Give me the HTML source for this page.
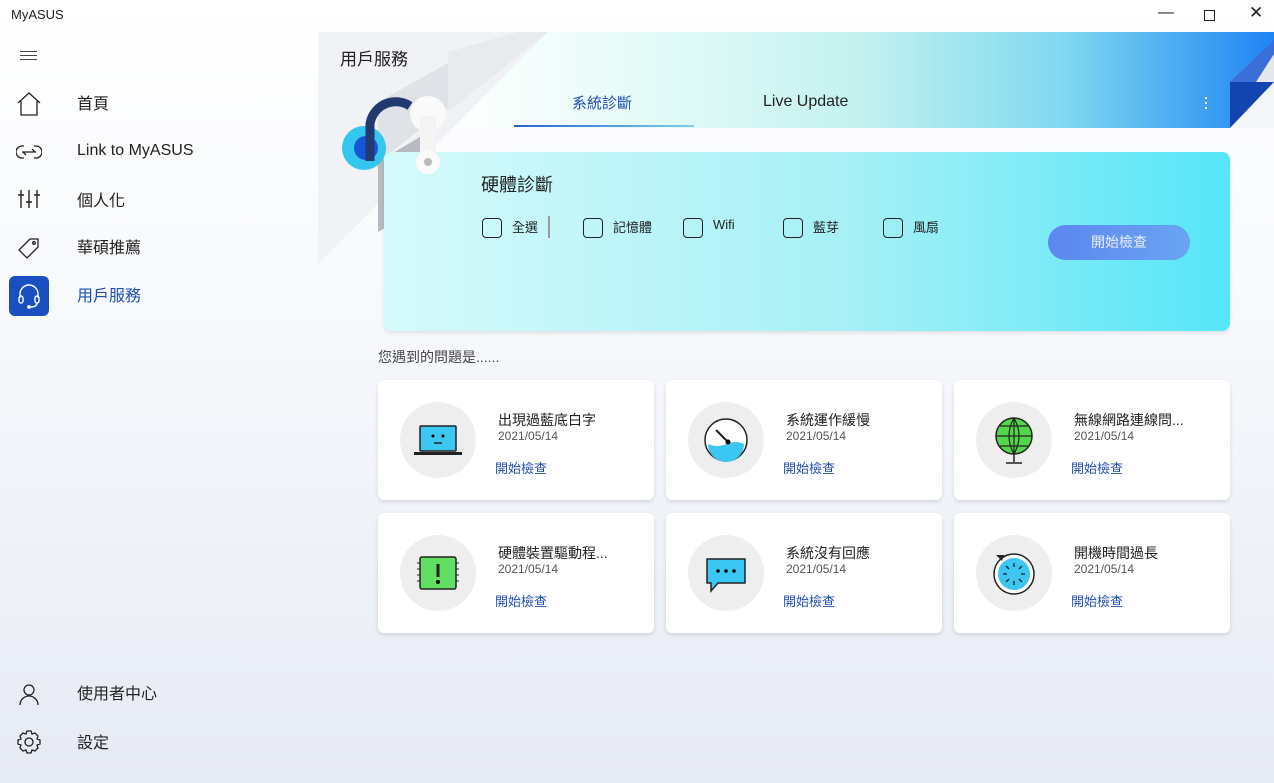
<!DOCTYPE html>
<html><head><meta charset="utf-8"><style>
*{margin:0;padding:0;box-sizing:border-box}
body{width:1274px;height:783px;overflow:hidden;font-family:"Liberation Sans","Noto Sans CJK TC",sans-serif;background:linear-gradient(180deg,#fff 0%,#f7f9fc 40%,#e6eaf4 100%);position:relative;color:#222}
.a{position:absolute}
.nav{font-size:16px;color:#222}
.card{position:absolute;width:276px;height:120px;background:#fff;border-radius:6px;box-shadow:0 2px 4px rgba(0,0,0,.12)}
.card .c{position:absolute;left:22px;top:22px;width:76px;height:76px;border-radius:50%;background:#eee}
.card .t{position:absolute;left:120px;top:30px;font-size:14px;color:#222}
.card .d{position:absolute;left:120px;top:49px;font-size:12px;color:#555}
.card .l{position:absolute;left:117px;top:78px;font-size:13px;color:#1f4fb0}
.cb{position:absolute;top:218px;width:20px;height:20px;border:1.5px solid #222;border-radius:4px}
.cl{position:absolute;top:217px;font-size:13px;color:#222}
</style></head><body>
<div class="a" style="left:11px;top:7px;font-size:13px">MyASUS</div>
<div class="a" style="left:1158px;top:4px;font-size:16px">—</div>
<div class="a" style="left:1204px;top:10px;width:11px;height:11px;border:1.2px solid #222"></div>
<div class="a" style="left:1249px;top:3px;font-size:17px">✕</div>

<div class="a" style="left:20px;top:51px;width:17px;height:1px;background:#444;box-shadow:0 4px 0 #444,0 8px 0 #444"></div>
<svg class="a" style="left:16px;top:91px" width="26" height="26" viewBox="0 0 26 26" fill="none" stroke="#222" stroke-width="1.3"><path d="M2 12L13 2L24 12M5 10V24H21V10"/></svg>
<div class="a nav" style="left:77px;top:90px">首頁</div>
<svg class="a" style="left:16px;top:142px" width="26" height="20" viewBox="0 0 26 20" fill="none" stroke="#222" stroke-width="1.3"><path d="M8 4H6a6 6 0 0 0 0 12h2M18 4h2a6 6 0 0 1 0 12h-2M6 10h14M16 7l3 3M10 13l-3-3"/></svg>
<div class="a nav" style="left:77px;top:142px">Link to MyASUS</div>
<svg class="a" style="left:18px;top:188px" width="22" height="22" viewBox="0 0 22 22" fill="none" stroke="#222" stroke-width="1.4"><path d="M3 2V20M11 2V20M19 2V20M0 7h6M8 14h6M16 7h6"/></svg>
<div class="a nav" style="left:77px;top:187px">個人化</div>
<svg class="a" style="left:17px;top:236px" width="24" height="24" viewBox="0 0 24 24" fill="none" stroke="#222" stroke-width="1.3"><path d="M13 3h8v8L10 22 2 14z"/><circle cx="17" cy="7" r="1.3"/></svg>
<div class="a nav" style="left:77px;top:234px">華碩推薦</div>
<div class="a" style="left:9px;top:276px;width:40px;height:40px;border-radius:6px;background:#1a4fc0"></div>
<svg class="a" style="left:17px;top:283px" width="24" height="26" viewBox="0 0 24 26" fill="none" stroke="#fff" stroke-width="1.4"><path d="M3 15V11a9 9 0 0 1 18 0v4"/><rect x="2" y="13" width="4" height="7" rx="2"/><rect x="18" y="13" width="4" height="7" rx="2"/><path d="M20 20q0 4-7 4"/><circle cx="12" cy="24" r="1.2" fill="#fff"/></svg>
<div class="a nav" style="left:77px;top:282px;color:#1f4fb0">用戶服務</div>
<svg class="a" style="left:17px;top:682px" width="24" height="24" viewBox="0 0 24 24" fill="none" stroke="#222" stroke-width="1.3"><circle cx="12" cy="8" r="5"/><path d="M3 23a9 9 0 0 1 18 0"/></svg>
<div class="a nav" style="left:77px;top:680px">使用者中心</div>
<svg class="a" style="left:16px;top:729px" width="26" height="26" viewBox="0 0 26 26" fill="none" stroke="#222" stroke-width="1.3"><circle cx="13" cy="13" r="4"/><path d="M11 2h4l1 3 3-1 3 3-1 3 3 1v4l-3 1 1 3-3 3-3-1-1 3h-4l-1-3-3 1-3-3 1-3-3-1v-4l3-1-1-3 3-3 3 1z"/></svg>
<div class="a nav" style="left:77px;top:729px">設定</div>

<div class="a" style="left:440px;top:32px;width:834px;height:96px;background:linear-gradient(90deg,#fff 0%,#e4fbf8 25%,#c4f2f0 50%,#7fd8f0 75%,#1f84f4 100%)"></div>
<svg class="a" style="left:318px;top:32px" width="260" height="240" viewBox="0 0 260 240"><polygon points="0,0 230,0 0,232" fill="#f0f2f5"/><polygon points="60,70 150,20 150,60 60,130" fill="#dfe2e6"/><polygon points="60,130 110,100 110,170 60,200" fill="#b8bcc2"/><polygon points="130,20 200,0 230,0 130,80" fill="#e8eaee"/></svg>
<svg class="a" style="left:1228px;top:32px" width="46" height="96" viewBox="0 0 46 96"><polygon points="46,8 46,50 2,50" fill="#3a6fd8"/><polygon points="46,22 46,50 28,50" fill="#e6e8ee"/><polygon points="2,50 46,50 2,96" fill="#1245b0"/><polygon points="46,50 46,96 2,96" fill="#f4f6fa"/></svg>
<div class="a" style="left:1205px;top:97px;width:2px;height:2px;background:#fff;box-shadow:0 5px 0 #fff,0 10px 0 #fff"></div>
<div class="a" style="left:340px;top:45px;font-size:17px">用戶服務</div>
<div class="a" style="left:572px;top:92px;font-size:15px;color:#1f4fb0">系統診斷</div>
<div class="a" style="left:514px;top:125px;width:180px;height:2px;background:linear-gradient(90deg,#2a5fd0,#7fd0e8)"></div>
<div class="a" style="left:763px;top:93px;font-size:16px">Live Update</div>

<div class="a" style="left:384px;top:152px;width:846px;height:179px;border-radius:8px;background:linear-gradient(90deg,#d6fafb 0%,#a6f0f6 55%,#55e6f8 100%);box-shadow:0 2px 4px rgba(0,0,0,.1)"></div>
<svg class="a" style="left:340px;top:86px" width="110" height="110" viewBox="0 0 110 110"><circle cx="24" cy="62" r="22" fill="#35c6ee"/><circle cx="26" cy="62" r="12" fill="#1556d8"/><path d="M30 75V38a26 26 0 0 1 40-18" fill="none" stroke="#223a70" stroke-width="9"/><circle cx="88" cy="28" r="18" fill="#fafafa"/><rect x="80" y="30" width="16" height="54" fill="#f4f4f4"/><circle cx="88" cy="76" r="12" fill="#fafafa"/><circle cx="88" cy="76" r="4" fill="#bbb"/></svg>
<div class="a" style="left:481px;top:171px;font-size:18px">硬體診斷</div>
<div class="cb" style="left:482px"></div><div class="cl" style="left:512px">全選</div>
<div class="a" style="left:548px;top:216px;width:2px;height:22px;background:#999"></div>
<div class="cb" style="left:583px"></div><div class="cl" style="left:613px">記憶體</div>
<div class="cb" style="left:683px"></div><div class="cl" style="left:713px">Wifi</div>
<div class="cb" style="left:783px"></div><div class="cl" style="left:813px">藍芽</div>
<div class="cb" style="left:883px"></div><div class="cl" style="left:913px">風扇</div>
<div class="a" style="left:1048px;top:225px;width:142px;height:35px;border-radius:18px;background:linear-gradient(90deg,#5c86f0,#6aa4f2);color:#e8f0ff;font-size:14px;text-align:center;line-height:35px">開始檢查</div>

<div class="a" style="left:378px;top:347px;font-size:14px;color:#444">您遇到的問題是......</div>

<div class="card" style="left:378px;top:380px"><div class="c"></div>
<svg class="a" style="left:34px;top:44px" width="52" height="34" viewBox="0 0 52 34"><rect x="8" y="2" width="36" height="25" rx="1" fill="#3cc6f2" stroke="#222" stroke-width="1.5"/><circle cx="21" cy="12" r="1.5"/><circle cx="31" cy="12" r="1.5"/><path d="M22 19h8" stroke="#222" stroke-width="1.5"/><rect x="2" y="28" width="48" height="3" fill="#222"/></svg>
<div class="t">出現過藍底白字</div><div class="d">2021/05/14</div><div class="l">開始檢查</div></div>
<div class="card" style="left:666px;top:380px"><div class="c"></div>
<svg class="a" style="left:36px;top:36px" width="48" height="48" viewBox="0 0 48 48"><circle cx="24" cy="24" r="21" fill="#fff" stroke="#222" stroke-width="1.5"/><path d="M6 28a18 18 0 0 0 36 0q-9-4-18 0t-18 0z" fill="#3cc6f2"/><path d="M14 14l12 12" stroke="#222" stroke-width="2"/><circle cx="26" cy="26" r="2.5"/></svg>
<div class="t">系統運作緩慢</div><div class="d">2021/05/14</div><div class="l">開始檢查</div></div>
<div class="card" style="left:954px;top:380px"><div class="c"></div>
<svg class="a" style="left:38px;top:36px" width="44" height="50" viewBox="0 0 44 50"><circle cx="22" cy="20" r="18" fill="#52d64a" stroke="#222" stroke-width="1.5"/><path d="M22 2v36M4 20h36M8 10h28M8 30h28M22 2q-10 18 0 36M22 2q10 18 0 36" fill="none" stroke="#222" stroke-width="1.2"/><path d="M22 38v8M14 47h16" stroke="#222" stroke-width="1.5"/></svg>
<div class="t">無線網路連線問...</div><div class="d">2021/05/14</div><div class="l">開始檢查</div></div>
<div class="card" style="left:378px;top:513px"><div class="c"></div>
<svg class="a" style="left:38px;top:42px" width="44" height="36" viewBox="0 0 44 36"><rect x="4" y="2" width="36" height="32" rx="2" fill="#62de62" stroke="#222" stroke-width="1.5"/><path d="M22 9v13" stroke="#222" stroke-width="3"/><circle cx="22" cy="27" r="2"/><path d="M1 8h3M1 14h3M1 20h3M1 26h3M40 8h3M40 14h3M40 20h3M40 26h3" stroke="#222"/></svg>
<div class="t">硬體裝置驅動程...</div><div class="d">2021/05/14</div><div class="l">開始檢查</div></div>
<div class="card" style="left:666px;top:513px"><div class="c"></div>
<svg class="a" style="left:38px;top:44px" width="44" height="38" viewBox="0 0 44 38"><path d="M3 2h38v24H14l-7 8v-8H3z" fill="#3cc6f2" stroke="#222" stroke-width="1.5"/><circle cx="14" cy="14" r="1.8"/><circle cx="22" cy="14" r="1.8"/><circle cx="30" cy="14" r="1.8"/></svg>
<div class="t">系統沒有回應</div><div class="d">2021/05/14</div><div class="l">開始檢查</div></div>
<div class="card" style="left:954px;top:513px"><div class="c"></div>
<svg class="a" style="left:36px;top:36px" width="48" height="48" viewBox="0 0 48 48"><circle cx="24" cy="25" r="20" fill="#fff" stroke="#222" stroke-width="1.5"/><circle cx="24" cy="25" r="16" fill="#3cc6f2"/><path d="M24 14v4M24 32v4M13 25h4M31 25h4M16 17l3 3M29 30l3 3M16 33l3-3M29 20l3-3" stroke="#222" stroke-width="1.3"/><path d="M6 6l8 0-2 6z" fill="#222"/></svg>
<div class="t">開機時間過長</div><div class="d">2021/05/14</div><div class="l">開始檢查</div></div>
</body></html>
